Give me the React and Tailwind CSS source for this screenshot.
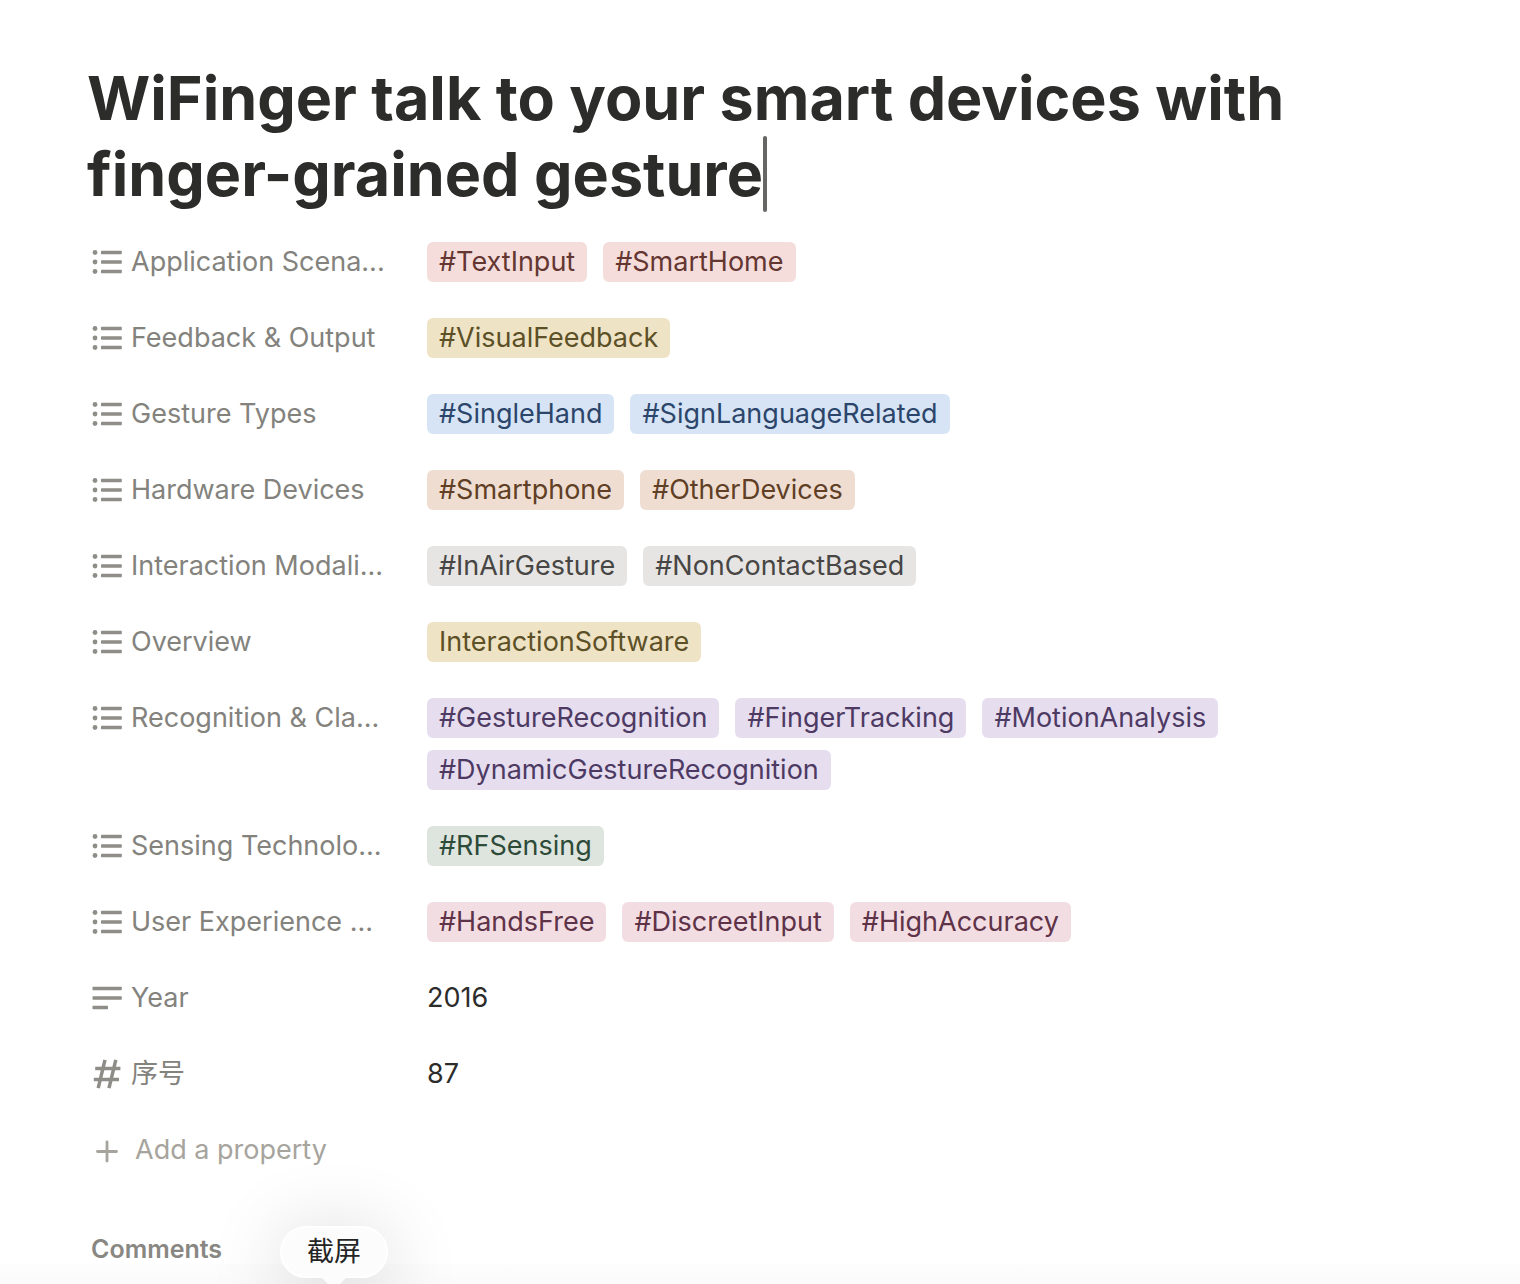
import React from "react";

const tones = {
  red: "bg-[#f5dddb] text-[#643631]",
  yellow: "bg-[#efe3c5] text-[#5c5027]",
  blue: "bg-[#d6e4f5] text-[#2c466b]",
  brown: "bg-[#efddd2] text-[#603f25]",
  gray: "bg-[#e6e5e3] text-[#474644]",
  purple: "bg-[#e6ddef] text-[#4d3a63]",
  green: "bg-[#dde5de] text-[#2e4a39]",
  pink: "bg-[#f2dde3] text-[#5e3247]",
};

const properties = [
  { label: "Application Scena...", icon: "list", tone: "red", tags: ["#TextInput", "#SmartHome"] },
  { label: "Feedback & Output", icon: "list", tone: "yellow", tags: ["#VisualFeedback"] },
  { label: "Gesture Types", icon: "list", tone: "blue", tags: ["#SingleHand", "#SignLanguageRelated"] },
  { label: "Hardware Devices", icon: "list", tone: "brown", tags: ["#Smartphone", "#OtherDevices"] },
  { label: "Interaction Modali...", icon: "list", tone: "gray", tags: ["#InAirGesture", "#NonContactBased"] },
  { label: "Overview", icon: "list", tone: "yellow", tags: ["InteractionSoftware"] },
  {
    label: "Recognition & Cla...",
    icon: "list",
    tone: "purple",
    tags: ["#GestureRecognition", "#FingerTracking", "#MotionAnalysis", "#DynamicGestureRecognition"],
  },
  { label: "Sensing Technolo...", icon: "list", tone: "green", tags: ["#RFSensing"] },
  { label: "User Experience ...", icon: "list", tone: "pink", tags: ["#HandsFree", "#DiscreetInput", "#HighAccuracy"] },
  { label: "Year", icon: "text", value: "2016" },
  { label: "序号", icon: "number", value: "87" },
];

function PropertyIcon({ kind }) {
  return (
    <svg className="size-8 shrink-0" viewBox="0 0 32 32" fill="#8f8d87" stroke="none" aria-hidden="true">
      {kind === "list" &&
        [6.5, 16, 25.5].map((y) => (
          <g key={y}>
            <circle cx="4" cy={y} r="2.4" />
            <rect x="10" y={y - 1.7} width="20.8" height="3.4" rx="0.6" />
          </g>
        ))}
      {kind === "text" && (
        <>
          <rect x="1.5" y="4.8" width="29.3" height="3.4" rx="0.6" />
          <rect x="1.5" y="14.3" width="29.3" height="3.4" rx="0.6" />
          <rect x="1.5" y="23.8" width="15.5" height="3.4" rx="0.6" />
        </>
      )}
      {kind === "number" && (
        <path
          d="M14 1.8 7.2 30.2M24.8 1.8 18 30.2M4.2 10.4h25.2M2.8 21.4H28"
          fill="none"
          stroke="#8f8d87"
          strokeWidth="3.5"
        />
      )}
    </svg>
  );
}

function PropertyRow({ label, icon, tone, tags, value }) {
  return (
    <div className="flex">
      <dt className="flex h-[68px] w-[336px] shrink-0 items-center gap-2 whitespace-nowrap text-[#83827d]">
        <PropertyIcon kind={icon} />
        {label}
      </dt>
      <dd className="flex min-w-0 flex-1 flex-wrap gap-x-4 gap-y-3 py-3.5 leading-10 text-[#2c2c2b]">
        {tags
          ? tags.map((tag) => (
              <span key={tag} className={`h-10 rounded-md px-3 ${tones[tone]}`}>
                {tag}
              </span>
            ))
          : value}
      </dd>
    </div>
  );
}

export default function App() {
  return (
    <main className="relative h-screen overflow-hidden bg-white pt-15 pr-40 pl-[91px] font-['Inter','Noto_Sans_CJK_SC',sans-serif] text-[27px]">
      <h1 className="-ml-1 text-[61px] leading-[76px] font-bold text-[#2c2c2b]">
        WiFinger talk to your smart devices with finger-grained gesture
        <span className="inline-block h-[76px] w-1 rounded-full bg-[#666665] align-top" />
      </h1>

      <dl className="mt-4 flex flex-col gap-2">
        {properties.map((property) => (
          <PropertyRow key={property.label} {...property} />
        ))}
      </dl>

      <button type="button" className="mt-2 flex h-[68px] items-center gap-3 text-[#a6a49d]">
        <svg className="size-8" viewBox="0 0 32 32" fill="none" stroke="#a6a49d" strokeWidth="2.8" strokeLinecap="round" aria-hidden="true">
          <path d="M16 8v19M6.5 17.5h19" />
        </svg>
        Add a property
      </button>

      <div className="absolute inset-x-0 bottom-0 h-5 bg-linear-to-b from-[#fdfdfd] to-[#fbfbfb]" />

      <section className="relative mt-8">
        <h2 className="text-[25px] leading-[66px] font-semibold text-[#888782]">Comments</h2>
        <div
          role="tooltip"
          className="absolute top-[10px] left-[189px] flex h-[52px] w-[108px] items-center justify-center rounded-[26px] border-2 border-white bg-[#fcfcfc] text-[#242424] shadow-[0_12px_80px_rgba(0,0,0,0.2)]"
        >
          截屏
          <svg className="absolute top-full left-1/2 -mt-px h-4 w-12 -translate-x-1/2" viewBox="0 0 48 16" fill="#fcfcfc" aria-hidden="true">
            <path d="M4 0C13 1 15 7 20 11Q24 14 28 11C33 7 35 1 44 0Z" />
          </svg>
        </div>
      </section>
    </main>
  );
}
